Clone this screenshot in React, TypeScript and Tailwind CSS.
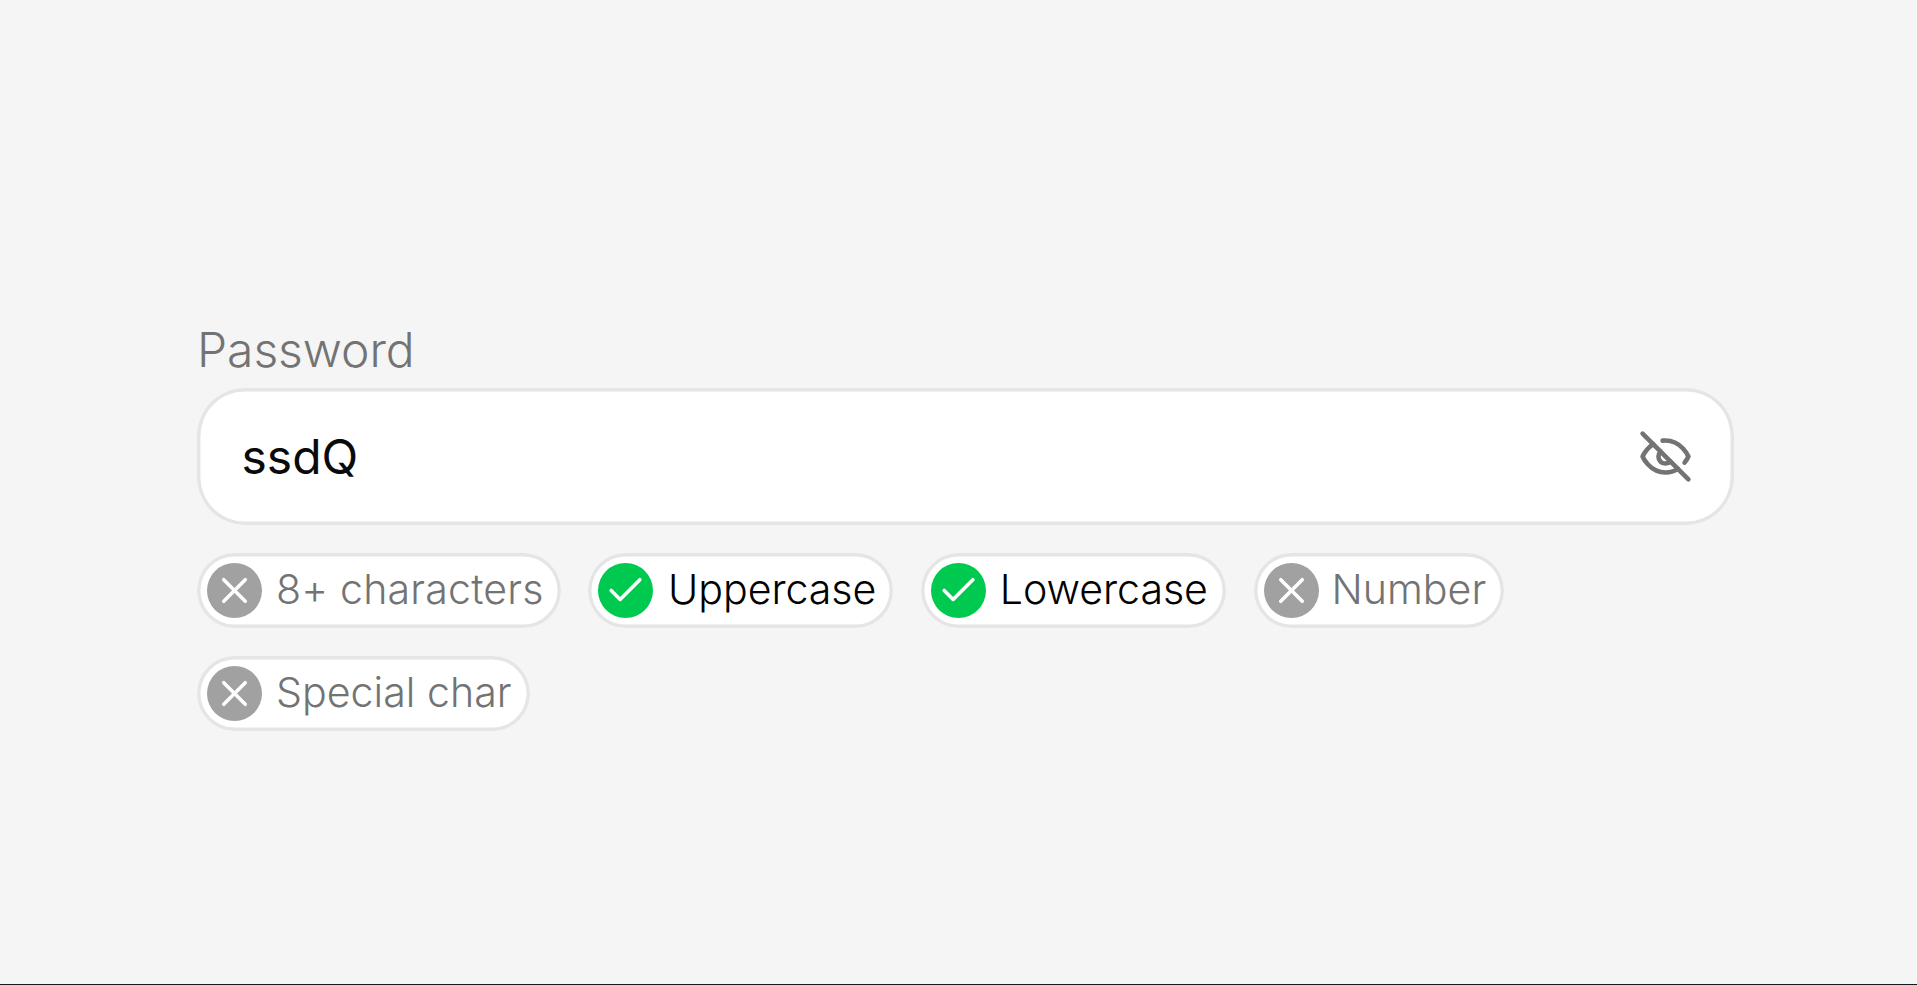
import { Check, X } from "lucide-react";

type Rule = { label: string; met: boolean; width: string; text: string };

const rules: Rule[] = [
  { label: "8+ characters", met: false, width: "w-[363.5px]", text: "tracking-[0.16px]" },
  { label: "Uppercase", met: true, width: "w-[305.25px]", text: "pl-px tracking-[-0.05px]" },
  { label: "Lowercase", met: true, width: "w-[305.25px]", text: "tracking-[-0.05px]" },
  { label: "Number", met: false, width: "w-[250.5px]", text: "-ml-px" },
  { label: "Special char", met: false, width: "w-[333px]", text: "" },
];

function EyeOffIcon() {
  return (
    <svg
      className="size-[55px]"
      viewBox="0 0 24 24"
      fill="none"
      stroke="currentColor"
      strokeWidth="2"
      strokeLinecap="round"
      strokeLinejoin="round"
    >
      <path d="M9.88 9.88a3 3 0 1 0 4.24 4.24" />
      <path d="M10.73 5.08A10.43 10.43 0 0 1 12 5c7 0 10 7 10 7a13.16 13.16 0 0 1-1.67 2.68" />
      <path d="M6.61 6.61A13.526 13.526 0 0 0 2 12s3 7 10 7a9.74 9.74 0 0 0 5.39-1.61" />
      <path d="M2 2l20 20" />
    </svg>
  );
}

function RulePill({ label, met, width, text }: Rule) {
  const Icon = met ? Check : X;
  return (
    <li
      className={`flex h-[75px] items-center gap-[14px] rounded-full bg-white pl-[10px] shadow-[inset_0_0_0_3.43px_#e5e5e5] ${width}`}
    >
      <span
        className={`mb-px flex size-[55px] shrink-0 items-center justify-center rounded-full text-white ${
          met ? "bg-[#00c950]" : "bg-[#a1a1a1]"
        }`}
      >
        <Icon className="size-[43px]" strokeWidth={2} />
      </span>
      <span
        className={`pb-[2px] text-[41.14px] leading-[55px] font-light whitespace-nowrap ${text} ${
          met ? "text-black" : "text-[#737373]"
        }`}
      >
        {label}
      </span>
    </li>
  );
}

export default function App() {
  return (
    <main className="h-[985px] w-full overflow-hidden border-b border-[#18181b] bg-[#f5f5f5] pt-[315px] pl-[197px] font-['Inter',sans-serif]">
      <div className="w-[1537px]">
        <label
          htmlFor="password"
          className="block h-[73px] text-[48px] leading-[69px] font-light tracking-[-0.06px] text-[#737373]"
        >
          Password
        </label>
        <div className="flex h-[137px] items-center rounded-[48px] bg-white pr-[41px] pl-[44.5px] shadow-[inset_0_0_0_3.43px_#e5e5e5]">
          <input
            id="password"
            type="text"
            defaultValue="ssdQ"
            className="min-w-0 flex-1 bg-transparent text-[48px] leading-[69px] text-[#0a0a0a] outline-none"
          />
          <button type="button" aria-label="Hide password" className="text-[#737373]">
            <EyeOffIcon />
          </button>
        </div>
        <ul className="mt-[28px] flex flex-wrap gap-x-[27.5px] gap-y-[28px]">
          {rules.map((rule) => (
            <RulePill key={rule.label} {...rule} />
          ))}
        </ul>
      </div>
    </main>
  );
}
